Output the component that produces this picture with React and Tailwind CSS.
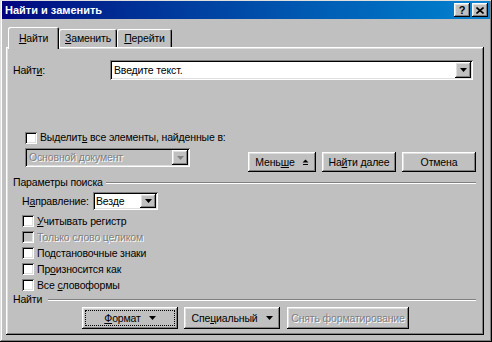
import React from 'react';

const raised =
  'shadow-[inset_-1px_-1px_#000000,inset_1px_1px_#ffffff,inset_-2px_-2px_#808080,inset_2px_2px_#dfdfdf]';
const sunken =
  'shadow-[inset_1px_1px_#808080,inset_-1px_-1px_#ffffff,inset_2px_2px_#000000,inset_-2px_-2px_#dfdfdf]';
const tabEdge = 'shadow-[inset_1px_1px_#ffffff,inset_-1px_0_#000000,inset_-2px_0_#808080]';
const disabledText = 'text-[#808080] [text-shadow:1px_1px_0_#ffffff]';

function DownArrow({ color = '#000' }) {
  return (
    <svg width="7" height="4" viewBox="0 0 7 4">
      <polygon points="0,0 7,0 3.5,4" fill={color} />
    </svg>
  );
}

function DropButton({ disabled }) {
  return (
    <div className={`w-[16px] h-full shrink-0 flex items-center justify-center bg-[#c0c0c0] ${raised}`}>
      <DownArrow color={disabled ? '#808080' : '#000'} />
    </div>
  );
}

function Checkbox({ disabled }) {
  return (
    <div className={`w-[12px] h-[12px] shrink-0 ${disabled ? 'bg-[#c0c0c0]' : 'bg-white'} ${sunken}`} />
  );
}

function Button({ children, width, height = 'h-[20px]', disabled, focused }) {
  return (
    <div
      className={`relative flex items-center justify-center whitespace-nowrap bg-[#c0c0c0] ${width} ${height} ${raised} ${
        disabled ? disabledText : 'text-black'
      }`}
    >
      {focused && <span className="absolute inset-[3px] border border-dotted border-black" />}
      {children}
    </div>
  );
}

function Etched({ label, lineStart }) {
  return (
    <div className="flex items-center h-[13px]">
      <span className="pl-[7px] shrink-0 whitespace-nowrap">{label}</span>
      <div className={`h-[2px] border-t border-t-[#808080] border-b border-b-white ${lineStart} flex-1 mr-[8px]`} />
    </div>
  );
}

function OptionRow({ children, disabled }) {
  return (
    <div className="flex items-center h-[16px] pl-[16px] gap-[3px] whitespace-nowrap">
      <Checkbox disabled={disabled} />
      <span className={disabled ? disabledText : ''}>{children}</span>
    </div>
  );
}

export default function App() {
  return (
    <div className="w-[492px] h-[342px] bg-[#c0c0c0] font-['Liberation_Sans',Arial,sans-serif] text-[10.5px] tracking-[-0.15px] leading-[13px] text-black overflow-hidden">
      <div className="w-full h-full flex flex-col pt-[1px] px-[2px] shadow-[inset_-1px_-1px_#000000,inset_1px_1px_#dfdfdf,inset_-2px_-2px_#808080,inset_2px_2px_#ffffff]">
        {/* title bar */}
        <div className="h-[18px] flex items-center bg-linear-to-r from-[#000080] to-[#1084d0] pl-[3px] pr-[2px]">
          <span className="text-white font-bold text-[11px] tracking-normal whitespace-nowrap">Найти и заменить</span>
          <div className="ml-auto flex gap-[2px]">
            <div className={`w-[16px] h-[14px] bg-[#c0c0c0] flex items-center justify-center font-bold text-[11px] leading-none ${raised}`}>
              ?
            </div>
            <div className={`w-[16px] h-[14px] bg-[#c0c0c0] flex items-center justify-center ${raised}`}>
              <svg width="8" height="7" viewBox="0 0 8 7">
                <path d="M0.5 0.5 L7.5 6.5 M7.5 0.5 L0.5 6.5" stroke="#000" strokeWidth="1.6" />
              </svg>
            </div>
          </div>
        </div>

        {/* tabs */}
        <div className="flex items-end mt-[8px] ml-[6px] h-[20px] whitespace-nowrap">
          <div className={`relative z-10 -mb-[2px] w-[51px] h-[22px] bg-[#c0c0c0] rounded-t-[2px] flex items-start justify-center pt-[5px] ${tabEdge}`}>
            <span><u>Н</u>айти</span>
          </div>
          <div className={`w-[58px] h-[18px] rounded-t-[2px] flex items-center justify-center ${tabEdge}`}>
            <span><u>З</u>аменить</span>
          </div>
          <div className={`w-[55px] h-[18px] rounded-t-[2px] flex items-center justify-center ${tabEdge}`}>
            <span><u>П</u>ерейти</span>
          </div>
        </div>

        {/* panel */}
        <div className={`ml-[4px] w-[478px] h-[288px] flex flex-col pt-[13px] ${raised}`}>
          <div className="flex items-center h-[20px]">
            <span className="pl-[7px] w-[104px] whitespace-nowrap">Найт<u>и</u>:</span>
            <div className={`w-[363px] h-[20px] bg-white flex items-center p-[2px] ${sunken}`}>
              <span className="pl-[2px] flex-1 whitespace-nowrap">Введите текст.</span>
              <DropButton />
            </div>
          </div>

          <div className="mt-[51px] flex items-center h-[13px] pl-[19px] gap-[3px] whitespace-nowrap">
            <Checkbox />
            <span>Выделит<u>ь</u> все элементы, найденные в:</span>
          </div>

          <div className="mt-[4px] flex items-start h-[24px]">
            <div className={`ml-[19px] w-[165px] h-[19px] bg-[#c0c0c0] flex items-center p-[2px] ${sunken}`}>
              <span className={`pl-[2px] flex-1 whitespace-nowrap ${disabledText}`}>Основной документ</span>
              <DropButton disabled />
            </div>
            <div className="ml-auto mr-[8px] mt-[4px] flex gap-[6px]">
              <Button width="w-[68px]">
                <span>Мень<u>ш</u>е</span>
                <svg className="ml-[7px]" width="7" height="6" viewBox="0 0 7 6">
                  <polygon points="0.5,3.5 3.5,0.5 6.5,3.5" fill="#000" />
                  <rect x="1" y="5" width="5" height="1" fill="#000" />
                </svg>
              </Button>
              <Button width="w-[74px]">
                <span>На<u>й</u>ти далее</span>
              </Button>
              <Button width="w-[74px]">
                <span>Отмена</span>
              </Button>
            </div>
          </div>

          <div className="mt-[4px]">
            <Etched label="Параметры поиска" lineStart="ml-[3px]" />
          </div>

          <div className="mt-[3px] flex items-center h-[18px]">
            <span className="pl-[16px] w-[87px] whitespace-nowrap">Н<u>а</u>правление:</span>
            <div className={`w-[65px] h-[18px] bg-white flex items-center p-[2px] ${sunken}`}>
              <span className="pl-[1px] flex-1">Везде</span>
              <DropButton />
            </div>
          </div>

          <div className="mt-[3px] flex flex-col">
            <OptionRow>
              <u>У</u>читывать регистр
            </OptionRow>
            <OptionRow disabled>Только слово целиком</OptionRow>
            <OptionRow>Подстановочные знаки</OptionRow>
            <OptionRow>
              Пр<u>о</u>износится как
            </OptionRow>
            <OptionRow>
              Все <u>с</u>ловоформы
            </OptionRow>
          </div>

          <Etched label="Найти" lineStart="ml-[6px]" />

          <div className="mt-[1px] flex gap-[6px] pl-[76px]">
            <Button width="w-[96px]" height="h-[22px]" focused>
              <span>
                <u>Ф</u>ормат
              </span>
              <span className="ml-[8px] flex">
                <DownArrow />
              </span>
            </Button>
            <Button width="w-[96px]" height="h-[22px]">
              <span>
                Спе<u>ц</u>иальный
              </span>
              <span className="ml-[8px] flex">
                <DownArrow />
              </span>
            </Button>
            <div className="ml-[1px]">
              <Button width="w-[122px]" height="h-[22px]" disabled>
                <span>Снять форматирование</span>
              </Button>
            </div>
          </div>
        </div>
      </div>
    </div>
  );
}
